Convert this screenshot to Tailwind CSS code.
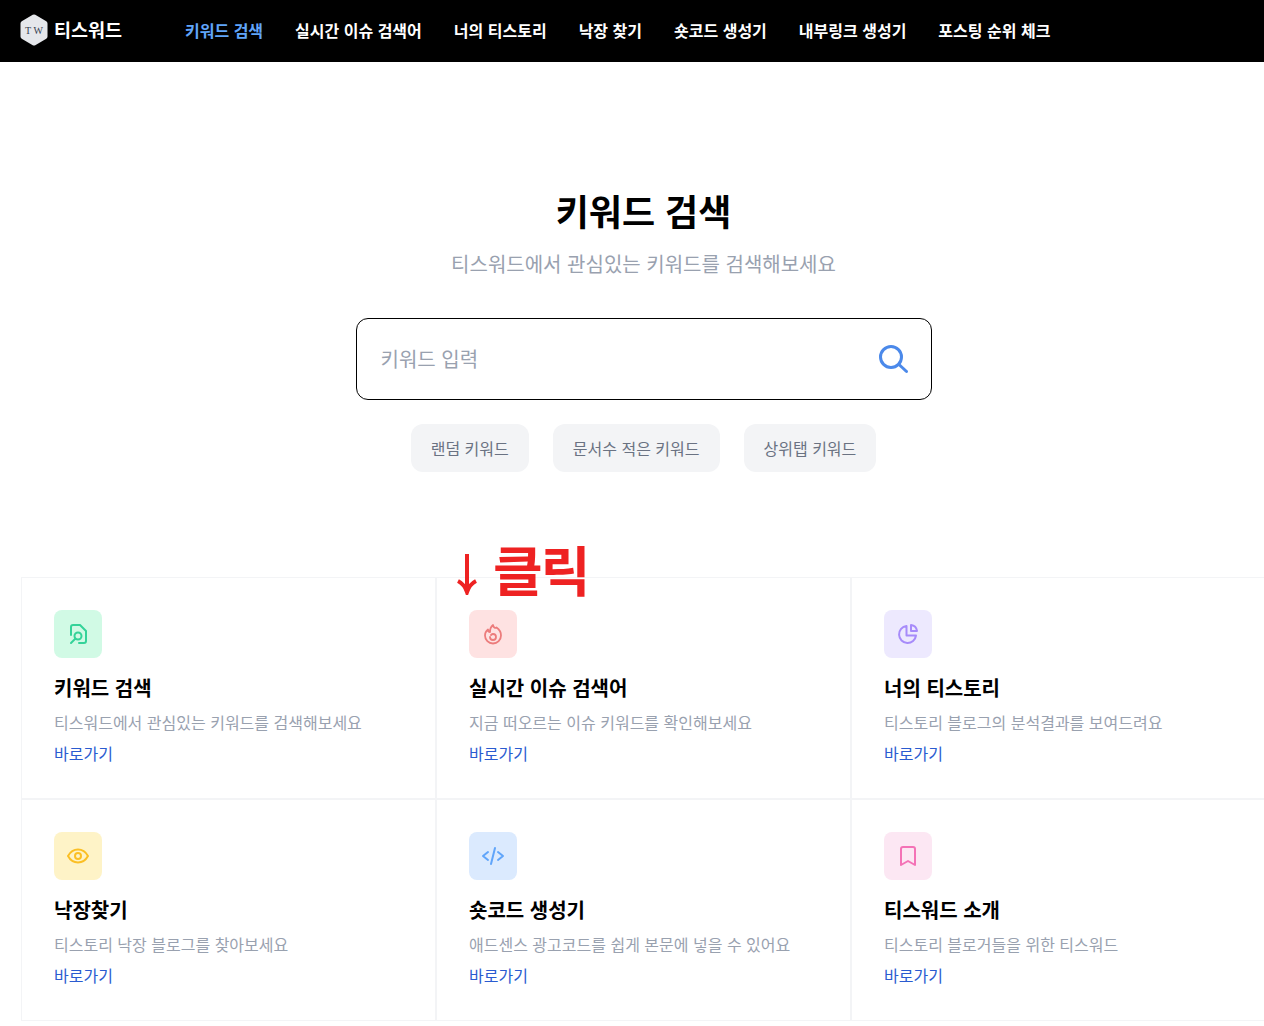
<!DOCTYPE html>
<html lang="ko">
<head>
    <meta charset="UTF-8">
    <meta name="viewport" content="width=device-width, initial-scale=1.0">
    <title>티스워드</title>
    <script src="https://cdn.jsdelivr.net/npm/@tailwindcss/browser@4"></script>
</head>
<body class="bg-white h-[1026px] overflow-hidden font-['Noto_Sans_CJK_KR','Noto_Sans',sans-serif]">
    <nav class="bg-black h-[62px] flex items-center pl-5 pb-[2px]">
        <a href="#" class="flex items-center w-[165px] shrink-0">
            <svg class="w-[28px] h-[32px]" viewBox="0 0 28 32">
                <path d="M14 3 25 9.500V22.500L14 29 3 22.500V9.500Z" fill="#e5e7eb" stroke="#e5e7eb" stroke-width="5" stroke-linejoin="round"></path>
                <text x="14" y="19.500" text-anchor="middle" font-size="10" textLength="18" font-family="Liberation Serif" fill="#374151">TW</text>
            </svg>
            <span class="ml-[6px] text-[18.500px] font-bold text-white">티스워드</span>
        </a>
        <div class="flex items-center gap-8 text-base font-semibold text-white whitespace-nowrap">
            <a href="#" class="text-[#60a5fa]">키워드 검색</a>
            <a href="#">실시간 이슈 검색어</a>
            <a href="#">너의 티스토리</a>
            <a href="#">낙장 찾기</a>
            <a href="#">숏코드 생성기</a>
            <a href="#">내부링크 생성기</a>
            <a href="#">포스팅 순위 체크</a>
        </div>
    </nav>

    <main class="relative w-[1287px]">
        <section class="flex flex-col items-center pt-[120px]">
            <h1 class="text-4xl font-bold text-black leading-[56px]">키워드 검색</h1>
            <p class="mt-3 text-xl text-gray-400 leading-[28px]">티스워드에서 관심있는 키워드를 검색해보세요</p>

            <div class="mt-10 w-[576px] h-[82px] border border-black rounded-xl flex items-center justify-between pl-6 pr-[22px]">
                <span class="text-xl text-gray-400">키워드 입력</span>
                <svg class="w-[32px] h-[32px] text-[#4b89ea]" fill="none" stroke="currentColor" stroke-width="3" stroke-linecap="round" viewBox="0 0 32 32">
                    <circle cx="14" cy="14" r="10.500"></circle>
                    <path d="M22 21.500 29.500 28.500"></path>
                </svg>
            </div>

            <div class="mt-6 flex gap-6 text-base text-gray-500">
                <button class="h-12 px-5 rounded-xl bg-gray-100">랜덤 키워드</button>
                <button class="h-12 px-5 rounded-xl bg-gray-100">문서수 적은 키워드</button>
                <button class="h-12 px-5 rounded-xl bg-gray-100">상위탭 키워드</button>
            </div>
        </section>

        <!-- Cards -->
        <div class="mt-[105px] ml-[21px] w-[1245px] grid grid-cols-3">
            <div class="h-[222px] border border-gray-100 p-8">
                <div class="w-12 h-12 rounded-lg bg-[#d1fae5] flex items-center justify-center text-[#34d399]">
                    <svg class="w-6 h-6" fill="none" stroke="currentColor" stroke-width="2" stroke-linecap="round" stroke-linejoin="round" viewBox="0 0 24 24">
                        <path d="M5 13V5a2 2 0 0 1 2-2h7l6 6v10a2 2 0 0 1-2 2h-5"></path>
                        <circle cx="12" cy="14" r="3.500"></circle>
                        <path d="M9.500 16.500 5 21"></path>
                    </svg>
                </div>
                <h3 class="mt-[15px] text-xl font-semibold text-black leading-[30px]">키워드 검색</h3>
                <p class="mt-[7px] text-base text-gray-400 leading-6">티스워드에서 관심있는 키워드를 검색해보세요</p>
                <a href="#" class="mt-[7px] block text-base text-[#2a5bd0] leading-6">바로가기</a>
            </div>
            <div class="h-[222px] border border-gray-100 p-8">
                <div class="w-12 h-12 rounded-lg bg-[#fee2e2] flex items-center justify-center text-[#ec7c7c]">
                    <svg class="w-6 h-6" fill="none" stroke="currentColor" stroke-width="1.800" stroke-linecap="round" stroke-linejoin="round" viewBox="0 0 24 24">
                        <path d="M12 3c.5 2.500 2 3.500 3.500 2.500C18.500 7.500 20 10.500 20 13.500a8 8 0 0 1-16 0c0-2.500 1.200-4.500 3-6 0 1.500.7 2.500 2 2.500 0-3 1-5.500 3-7Z"></path>
                        <path d="M9 15a3 3 0 1 0 3-3c-1 0-1.500.5-2 1"></path>
                    </svg>
                </div>
                <h3 class="mt-[15px] text-xl font-semibold text-black leading-[30px]">실시간 이슈 검색어</h3>
                <p class="mt-[7px] text-base text-gray-400 leading-6">지금 떠오르는 이슈 키워드를 확인해보세요</p>
                <a href="#" class="mt-[7px] block text-base text-[#2a5bd0] leading-6">바로가기</a>
            </div>
            <div class="h-[222px] border border-gray-100 p-8">
                <div class="w-12 h-12 rounded-lg bg-[#ede9fe] flex items-center justify-center text-[#a78bfa]">
                    <svg class="w-6 h-6" fill="none" stroke="currentColor" stroke-width="2" stroke-linecap="round" stroke-linejoin="round" viewBox="0 0 24 24">
                        <path d="M10.500 4a8.500 8.500 0 1 0 9.500 9.500h-9.500Z"></path>
                        <path d="M15 3a7 7 0 0 1 6 6h-6Z"></path>
                    </svg>
                </div>
                <h3 class="mt-[15px] text-xl font-semibold text-black leading-[30px]">너의 티스토리</h3>
                <p class="mt-[7px] text-base text-gray-400 leading-6">티스토리 블로그의 분석결과를 보여드려요</p>
                <a href="#" class="mt-[7px] block text-base text-[#2a5bd0] leading-6">바로가기</a>
            </div>
            <div class="h-[222px] border border-gray-100 p-8">
                <div class="w-12 h-12 rounded-lg bg-[#fef3c7] flex items-center justify-center text-[#fbbf24]">
                    <svg class="w-6 h-6" fill="none" stroke="currentColor" stroke-width="2" stroke-linecap="round" stroke-linejoin="round" viewBox="0 0 24 24">
                        <path d="M2 12c2.500-4.500 5.800-6.500 10-6.500S19.500 7.500 22 12c-2.500 4.500-5.800 6.500-10 6.500S4.500 16.500 2 12Z"></path>
                        <circle cx="12" cy="12" r="3"></circle>
                    </svg>
                </div>
                <h3 class="mt-[15px] text-xl font-semibold text-black leading-[30px]">낙장찾기</h3>
                <p class="mt-[7px] text-base text-gray-400 leading-6">티스토리 낙장 블로그를 찾아보세요</p>
                <a href="#" class="mt-[7px] block text-base text-[#2a5bd0] leading-6">바로가기</a>
            </div>
            <div class="h-[222px] border border-gray-100 p-8">
                <div class="w-12 h-12 rounded-lg bg-[#dbeafe] flex items-center justify-center text-[#60a5fa]">
                    <svg class="w-6 h-6" fill="none" stroke="currentColor" stroke-width="2" stroke-linecap="round" stroke-linejoin="round" viewBox="0 0 24 24">
                        <path d="M7 8l-5 4 5 4"></path>
                        <path d="M17 8l5 4-5 4"></path>
                        <path d="M14 4l-4 16"></path>
                    </svg>
                </div>
                <h3 class="mt-[15px] text-xl font-semibold text-black leading-[30px]">숏코드 생성기</h3>
                <p class="mt-[7px] text-base text-gray-400 leading-6">애드센스 광고코드를 쉽게 본문에 넣을 수 있어요</p>
                <a href="#" class="mt-[7px] block text-base text-[#2a5bd0] leading-6">바로가기</a>
            </div>
            <div class="h-[222px] border border-gray-100 p-8">
                <div class="w-12 h-12 rounded-lg bg-[#fce7f3] flex items-center justify-center text-[#f472b6]">
                    <svg class="w-6 h-6" fill="none" stroke="currentColor" stroke-width="2" stroke-linecap="round" stroke-linejoin="round" viewBox="0 0 24 24">
                        <path d="M5 5a2 2 0 0 1 2-2h10a2 2 0 0 1 2 2v16l-7-4-7 4Z"></path>
                    </svg>
                </div>
                <h3 class="mt-[15px] text-xl font-semibold text-black leading-[30px]">티스워드 소개</h3>
                <p class="mt-[7px] text-base text-gray-400 leading-6">티스토리 블로거들을 위한 티스워드</p>
                <a href="#" class="mt-[7px] block text-base text-[#2a5bd0] leading-6">바로가기</a>
            </div>
        </div>

        <!-- Annotation over the cards -->
        <div class="absolute left-[456px] top-[471px] flex items-center text-[#ee2222] font-bold">
            <svg class="w-[22px] h-[42px] mt-[10px]" fill="none" stroke="currentColor" stroke-width="4" viewBox="0 0 22 42">
                <path d="M11 1V39"></path>
                <path d="M2 28c4 2 7 5 9 11 2-6 5-9 9-11"></path>
            </svg>
            <span class="ml-[15px] text-[54px] leading-[72px] tracking-[-2px]">클릭</span>
        </div>
    </main>
</body>
</html>
